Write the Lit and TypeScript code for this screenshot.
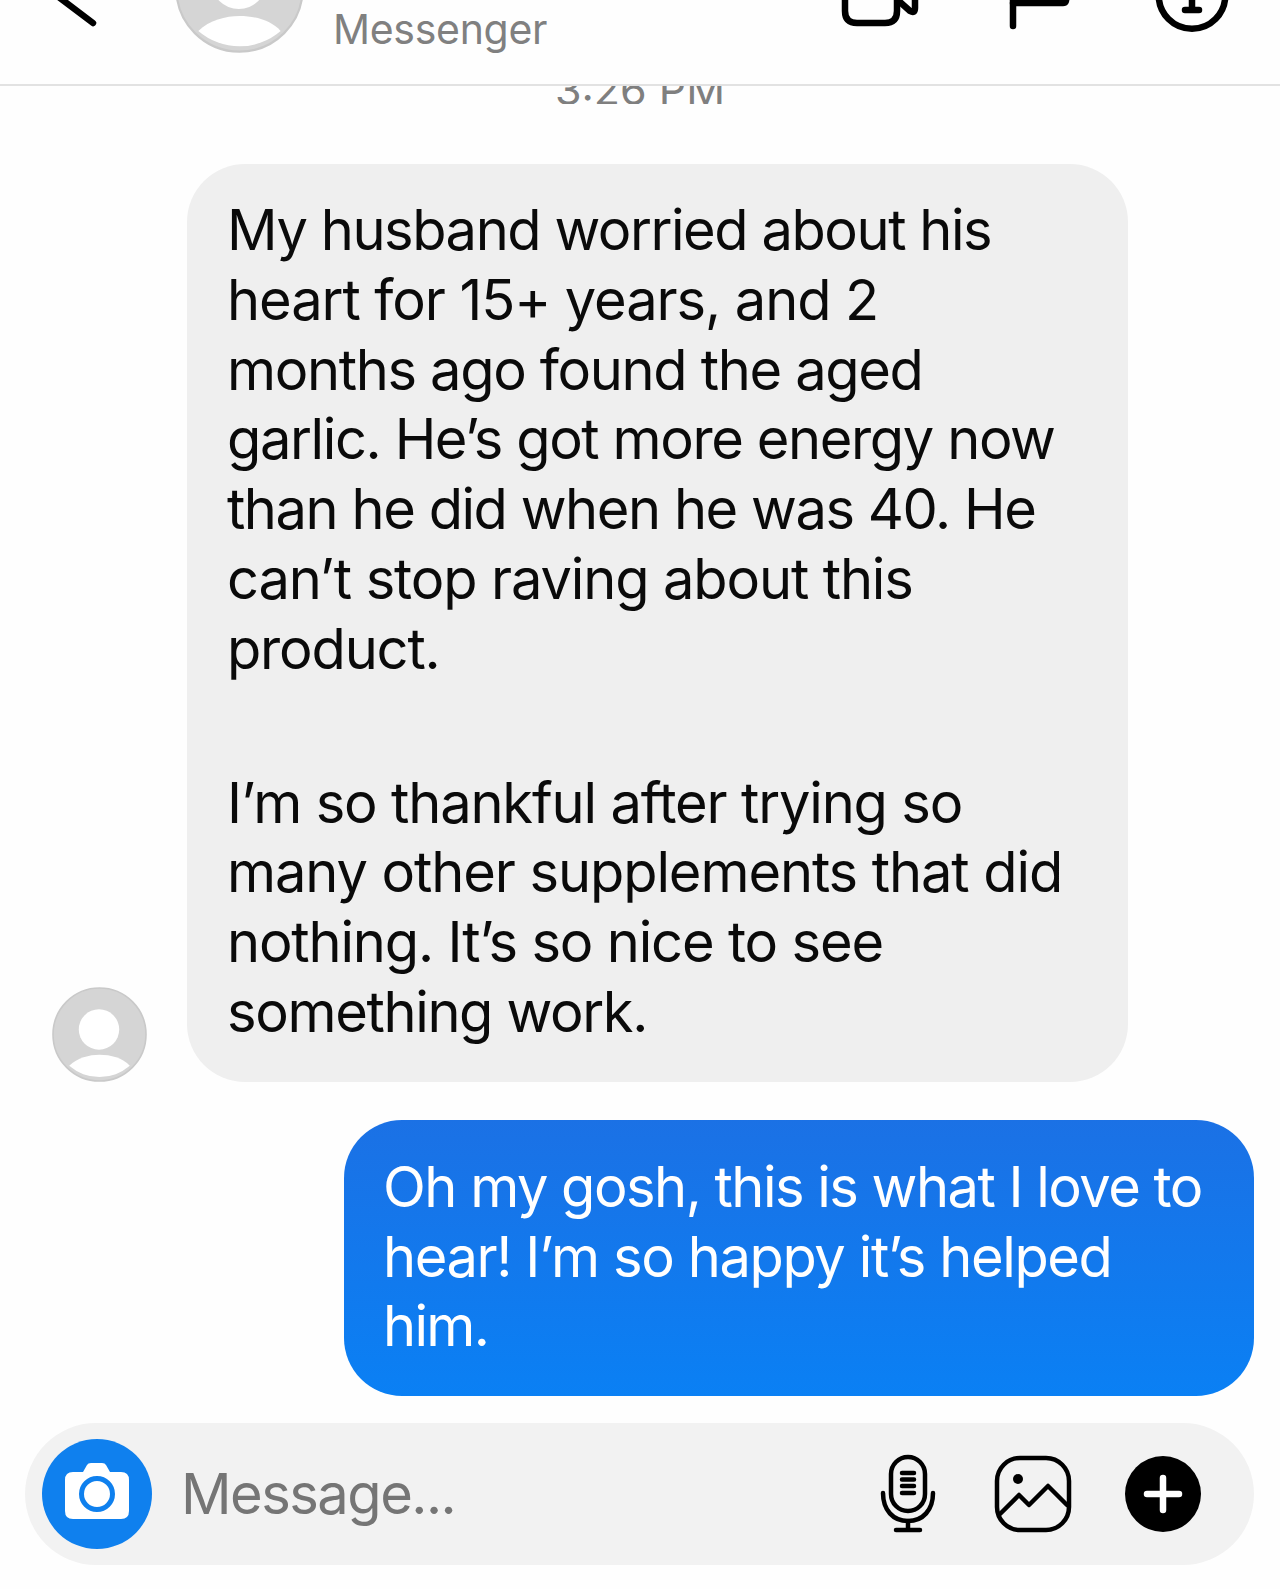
import { LitElement, html, css } from 'lit';
import { customElement } from 'lit/decorators.js';

type Line = [text: string, tracking: number];

const para1: Line[] = [
  ['My husband worried about his', -1.44],
  ['heart for 15+ years, and 2', -1.08],
  ['months ago found the aged', -1.34],
  ['garlic. He’s got more energy now', -1.39],
  ['than he did when he was 40. He', -1.45],
  ['can’t stop raving about this', -1.13],
  ['product.', -1.17],
];
const para2: Line[] = [
  ['I’m so thankful after trying so', -1.16],
  ['many other supplements that did', -1.09],
  ['nothing. It’s so nice to see', -1.17],
  ['something work.', -1.35],
];
const reply: Line[] = [
  ['Oh my gosh, this is what I love to', -1.51],
  ['hear! I’m so happy it’s helped', -1.39],
  ['him.', -1.67],
];

const lines = (items: Line[]) =>
  items.map(([text, tracking]) => html`<div style="letter-spacing:${tracking}px">${text}</div>`);

const avatar = (size: number) => html`
  <svg class="avatar" width=${size} height=${size} viewBox="0 0 94 94">
    <circle cx="47" cy="47" r="46" fill="#d5d5d5" stroke="#c9c9c9" stroke-width="1.6"></circle>
    <circle cx="46.5" cy="42" r="20" fill="#fff"></circle>
    <path d="M17 78C25 70 37 67 47 67C58 67 70 70 77 78A46 46 0 0 1 17 78Z" fill="#fff"></path>
  </svg>
`;

@customElement('app-root')
export class AppRoot extends LitElement {
  static styles = css`
    :host {
      display: block;
      width: 1280px;
      height: 1589px;
      overflow: hidden;
      background: #fefefe;
      font-family: Inter, 'Liberation Sans', sans-serif;
      color: #0a0a0a;
    }

    svg {
      display: block;
      flex: none;
      overflow: visible;
    }

    .header {
      height: 86px;
      box-sizing: border-box;
      border-bottom: 2px solid #e2e2e2;
      overflow: hidden;
      display: flex;
      align-items: flex-end;
    }

    .back {
      margin: 0 0 52px 60px;
    }

    .header .avatar {
      margin: 0 0 31px 79px;
    }

    .title {
      margin: 0 0 34px 29px;
      font-size: 41px;
      line-height: 41px;
      color: #808080;
      letter-spacing: -0.3px;
    }

    .actions {
      margin: 0 48px 52px auto;
      display: flex;
      align-items: flex-end;
    }

    .flag {
      margin: 0 80px 0 88px;
    }

    .time-clip {
      height: 18px;
      overflow: hidden;
      display: flex;
      justify-content: center;
      align-items: flex-end;
    }

    .time {
      font-size: 43px;
      line-height: 43px;
      margin-bottom: -7px;
      color: #7f7f7f;
    }

    .incoming {
      margin-top: 60px;
      display: flex;
      align-items: flex-end;
      padding-left: 52px;
      gap: 40px;
    }

    .bubble {
      font-size: 56px;
      line-height: 69.8px;
      white-space: nowrap;
      box-sizing: border-box;
      border-radius: 58px;
    }

    .gray {
      width: 941px;
      padding: 32px 40px 34px;
      background: #efefef;
    }

    .para + .para {
      margin-top: 84px;
    }

    .blue {
      width: 910px;
      margin: 38px 26px 0 auto;
      padding: 33px 40px 34px 39px;
      color: #fff;
      background: linear-gradient(180deg, #1b71e5, #0a80f4);
    }

    .composer {
      margin: 27px 26px 0 25px;
      height: 142px;
      border-radius: 71px;
      background: #f2f2f2;
      display: flex;
      align-items: center;
      padding: 0 53px 0 17px;
    }

    .placeholder {
      margin-left: 29px;
      font-size: 56px;
      line-height: 70px;
      letter-spacing: -1.5px;
      color: #757575;
      flex: 1;
    }

    .mic {
      margin-right: 59px;
    }

    .gallery {
      margin-right: 54px;
    }
  `;

  render() {
    return html`
      <div class="header">
        <svg class="back" width="36" height="32" viewBox="0 0 36 32">
          <path d="M-8 -8L33 23" stroke="#000" stroke-width="6.5" stroke-linecap="round" fill="none"></path>
        </svg>
        ${avatar(129)}
        <div class="title">Messenger</div>
        <div class="actions">
          <svg width="80" height="32" viewBox="0 0 80 32" fill="none" stroke="#000" stroke-width="6.5" stroke-linecap="round" stroke-linejoin="round">
            <path d="M5 -20V11Q5 23 17 23H45Q57 23 57 11V-20"></path>
            <path d="M60 2L70 11Q75 14 75 8V-20"></path>
          </svg>
          <svg class="flag" width="64" height="32" viewBox="0 0 64 32" fill="none" stroke="#000" stroke-width="6.5" stroke-linecap="round" stroke-linejoin="round">
            <path d="M5 26V-20"></path>
            <path d="M5 3H55Q59 3 58 -3L50 -20"></path>
          </svg>
          <svg width="80" height="32" viewBox="0 0 80 32" fill="none" stroke="#000" stroke-width="6.5" stroke-linecap="round">
            <circle cx="40" cy="-4.5" r="33.25"></circle>
            <path d="M40 -10V10M33 10H47"></path>
          </svg>
        </div>
      </div>
      <div class="time-clip"><div class="time">3:26 PM</div></div>
      <div class="incoming">
        ${avatar(95)}
        <div class="bubble gray">
          <div class="para">${lines(para1)}</div>
          <div class="para">${lines(para2)}</div>
        </div>
      </div>
      <div class="bubble blue">${lines(reply)}</div>
      <div class="composer">
        <svg width="110" height="110" viewBox="0 0 110 110">
          <circle cx="55" cy="55" r="55" fill="#0f80ee"></circle>
          <path d="M41 33L45 26Q46 24 49 24H60Q63 24 64 26L68 33H79Q87 33 87 41V72Q87 80 79 80H31Q23 80 23 72V41Q23 33 31 33Z" fill="#fff"></path>
          <circle cx="55" cy="55" r="15.5" fill="#fff" stroke="#0f80ee" stroke-width="5"></circle>
        </svg>
        <div class="placeholder">Message...</div>
        <svg class="mic" width="56" height="78" viewBox="0 0 56 78" fill="none" stroke="#000" stroke-width="4.5" stroke-linecap="round">
          <rect x="11" y="2" width="34" height="54" rx="17"></rect>
          <path d="M22 18H34M22 24.5H34M22 31H34M22 38H34"></path>
          <path d="M3 38C3 55 13 66 28 66C43 66 53 55 53 38"></path>
          <path d="M28 66V75M16 75H40"></path>
        </svg>
        <svg class="gallery" width="76" height="76" viewBox="0 0 76 76" fill="none" stroke="#000" stroke-width="4.5" stroke-linecap="round" stroke-linejoin="round">
          <rect x="2" y="2" width="72" height="72" rx="23"></rect>
          <circle cx="23" cy="23" r="5" fill="#000" stroke="none"></circle>
          <path d="M5 58L24 39L34 49L53 30L72 49"></path>
        </svg>
        <svg width="76" height="76" viewBox="0 0 76 76">
          <circle cx="38" cy="38" r="38" fill="#000"></circle>
          <path d="M38 22V54M22 38H54" stroke="#fff" stroke-width="6.5" stroke-linecap="round"></path>
        </svg>
      </div>
    `;
  }
}
